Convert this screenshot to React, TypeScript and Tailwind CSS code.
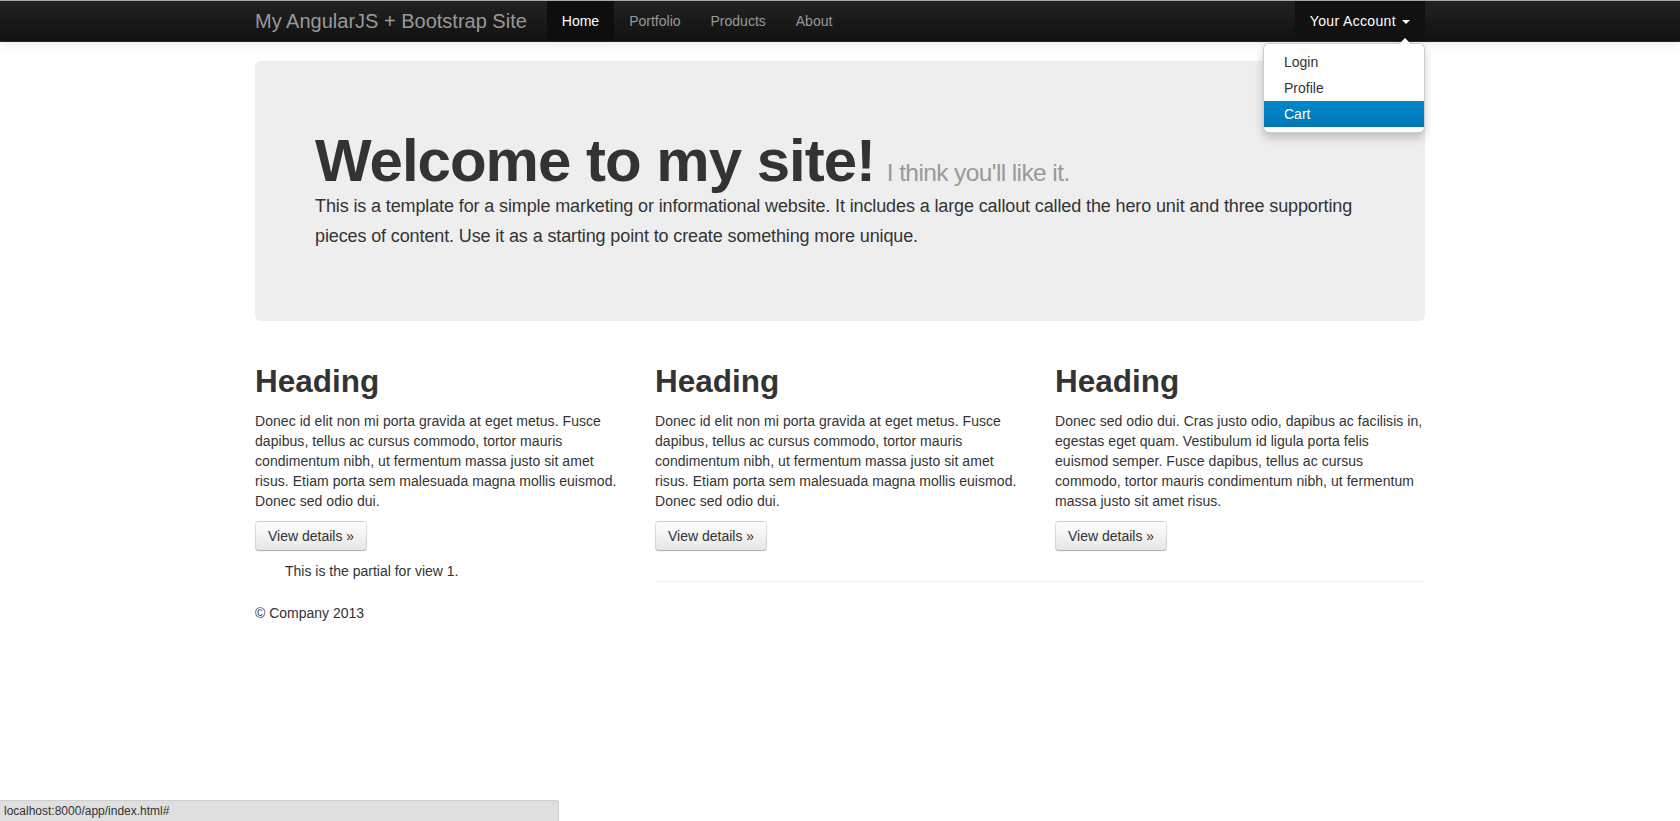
import React from 'react'

const font = { fontFamily: '"Liberation Sans", Arial, sans-serif' }

const columns = [
  'Donec id elit non mi porta gravida at eget metus. Fusce dapibus, tellus ac cursus commodo, tortor mauris condimentum nibh, ut fermentum massa justo sit amet risus. Etiam porta sem malesuada magna mollis euismod. Donec sed odio dui.',
  'Donec id elit non mi porta gravida at eget metus. Fusce dapibus, tellus ac cursus commodo, tortor mauris condimentum nibh, ut fermentum massa justo sit amet risus. Etiam porta sem malesuada magna mollis euismod. Donec sed odio dui.',
  'Donec sed odio dui. Cras justo odio, dapibus ac facilisis in, egestas eget quam. Vestibulum id ligula porta felis euismod semper. Fusce dapibus, tellus ac cursus commodo, tortor mauris condimentum nibh, ut fermentum massa justo sit amet risus.',
]

function Navbar() {
  const links = ['Portfolio', 'Products', 'About']
  return (
    <div className="h-[42px] border-t border-t-[#a8a8a8] border-b border-b-[#252525] bg-gradient-to-b from-[#222] to-[#111] shadow-[0_1px_10px_rgba(0,0,0,0.1)]">
      <div className="w-[1170px] mx-auto flex h-full">
        <a className="-ml-5 px-5 py-[10px] text-[20px] leading-[20px] text-[#999]">
          My AngularJS + Bootstrap Site
        </a>
        <ul className="flex">
          <li className="px-[15px] py-[10px] text-[14px] leading-[20px] text-white bg-[#0e0e0e]">Home</li>
          {links.map((l) => (
            <li key={l} className="px-[15px] py-[10px] text-[14px] leading-[20px] text-[#999]">
              {l}
            </li>
          ))}
        </ul>
        {/* Account dropdown, shown open */}
        <div className="ml-auto relative">
          <div className="flex items-center pl-[15px] pr-[15px] py-[10px] text-[14px] leading-[20px] tracking-[0.35px] text-white bg-[#111] h-full">
            Your Account
            <span className="ml-[6px] mt-[1px] w-0 h-0 border-l-4 border-r-4 border-t-4 border-l-transparent border-r-transparent border-t-white" />
          </div>
          <div className="absolute right-0 top-full mt-[2px] w-[162px] py-[5px] bg-white border border-black/20 rounded-md shadow-[0_5px_10px_rgba(0,0,0,0.2)] z-10">
            <span className="absolute -top-[7px] right-[12px] w-0 h-0 border-l-[7px] border-r-[7px] border-b-[7px] border-l-transparent border-r-transparent border-b-black/20" />
            <span className="absolute -top-[6px] right-[13px] w-0 h-0 border-l-[6px] border-r-[6px] border-b-[6px] border-l-transparent border-r-transparent border-b-white" />
            <div className="px-5 py-[3px] text-[14px] leading-[20px] text-[#333]">Login</div>
            <div className="px-5 py-[3px] text-[14px] leading-[20px] text-[#333]">Profile</div>
            <div className="px-5 py-[3px] text-[14px] leading-[20px] text-white bg-gradient-to-b from-[#0088cc] to-[#0077b3]">Cart</div>
          </div>
        </div>
      </div>
    </div>
  )
}

export default function App() {
  return (
    <div className="min-h-screen bg-white text-[#333]" style={font}>
      <Navbar />

      {/* Hero unit */}
      <div className="w-[1170px] mx-auto mt-[19px] bg-[#eee] rounded-md p-[60px]">
        <h1 className="mt-[10px] text-[60px] leading-[60px] font-bold tracking-[-1px] text-[#333]">
          Welcome to my site!{' '}
          <small className="-ml-[4px] text-[24.5px] leading-none font-normal text-[#999] tracking-[-0.6px]">I think you'll like it.</small>
        </h1>
        <p className="mb-[10px] text-[18px] leading-[30px] font-extralight tracking-[-0.12px] text-[#333]">
          This is a template for a simple marketing or informational website. It includes a large callout called the hero unit and three supporting pieces of content. Use it as a starting point to create something more unique.
        </p>
      </div>

      {/* Three columns */}
      <div className="w-[1170px] mx-auto mt-[30px] grid grid-cols-3 gap-[30px]">
        {columns.map((text, i) => (
          <div key={i}>
            <h2 className="my-[10px] text-[31.5px] leading-[40px] font-bold text-[#333]">Heading</h2>
            <p className="mb-[10px] text-[14px] leading-[20px] tracking-[0.05px]">{text}</p>
            <p className="mb-[10px]">
              <a className="inline-block px-3 py-1 text-[14px] leading-[20px] text-[#333] rounded-[4px] border border-black/10 border-b-[#b3b3b3] bg-gradient-to-b from-white to-[#e6e6e6] shadow-[inset_0_1px_0_rgba(255,255,255,0.2),0_1px_2px_rgba(0,0,0,0.05)]">
                View details »
              </a>
            </p>
          </div>
        ))}
      </div>

      <div className="w-[1170px] mx-auto flex mb-[20px]">
        <p className="w-[400px] pl-[30px] text-[14px] leading-[20px]">This is the partial for view 1.</p>
        <div className="flex-1 mt-[20px] h-[2px] border-t border-t-[#eee] border-b border-b-white" />
      </div>

      <footer className="w-[1170px] mx-auto">
        <p className="text-[14px] leading-[20px]">© Company 2013</p>
      </footer>

      {/* Browser status bubble */}
      <div className="fixed bottom-0 left-0 w-[559px] h-[21px] bg-[#dfdfdf] border-t border-r border-[#cfcfcf] rounded-tr-[3px] pl-[4px] text-[12px] leading-[20px] text-[#333]">
        localhost:8000/app/index.html#
      </div>
    </div>
  )
}
